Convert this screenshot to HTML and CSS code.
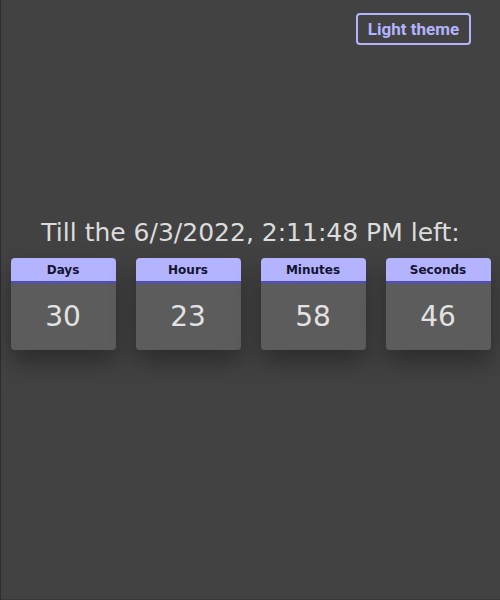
FILE: index.html
```html
<!DOCTYPE html>
<html>
<head>
<meta charset="utf-8">
<link rel="stylesheet" href="styles.css">
</head>
<body>
<div class="page">
  <header class="topbar">
    <button class="theme-btn">Light theme</button>
  </header>
  <main class="main">
    <h1 class="title">Till the 6/3/2022, 2:11:48 PM left:</h1>
    <div class="cards">
      <div class="card"><div class="card-head">Days</div><div class="card-body">30</div></div>
      <div class="card"><div class="card-head">Hours</div><div class="card-body">23</div></div>
      <div class="card"><div class="card-head">Minutes</div><div class="card-body">58</div></div>
      <div class="card"><div class="card-head">Seconds</div><div class="card-body">46</div></div>
    </div>
  </main>
</div>
</body>
</html>
```
FILE: styles.css
```css
html, body {
  margin: 0;
  padding: 0;
  background: #424242;
}
.page {
  box-sizing: border-box;
  width: 500px;
  height: 600px;
  border-left: 1px solid #2c2c2c;
  border-bottom: 1px solid #383838;
  font-family: "DejaVu Sans", sans-serif;
}
.topbar {
  display: flex;
  justify-content: flex-end;
  padding: 13px 29px 0 0;
}
.theme-btn {
  box-sizing: border-box;
  width: 115px;
  height: 32px;
  background: transparent;
  border: 2px solid #b3b3ff;
  border-radius: 4px;
  color: #b3b3ff;
  font-family: Roboto, "Liberation Sans", sans-serif;
  font-weight: bold;
  font-size: 17px;
  padding: 0;
  cursor: pointer;
}
.main {
  padding-top: 173px;
}
.title {
  margin: 0;
  text-align: center;
  font-weight: normal;
  font-size: 25px;
  line-height: 29px;
  color: #dcdcdc;
}
.cards {
  display: flex;
  justify-content: center;
  gap: 20px;
  margin-top: 11px;
}
.card {
  width: 105px;
  border-radius: 4px;
  overflow: hidden;
  box-shadow: 0 12px 24px rgba(0, 0, 0, 0.35);
}
.card-head {
  height: 23px;
  background: #b3b3ff;
  border-bottom: 2px solid #4c4cd6;
  color: #14142e;
  font-weight: bold;
  font-size: 12px;
  line-height: 25px;
  text-align: center;
}
.card-body {
  height: 67px;
  background: #5c5c5c;
  color: #e2e2e2;
  font-size: 28px;
  line-height: 67px;
  text-align: center;
}
```
